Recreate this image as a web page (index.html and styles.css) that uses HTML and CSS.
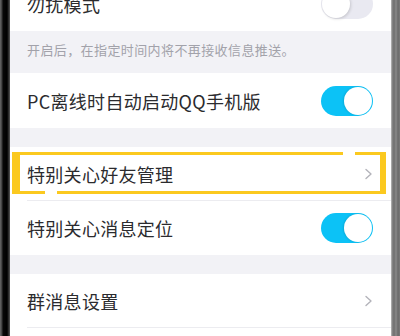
FILE: index.html
```html
<!DOCTYPE html>
<html lang="zh-CN">
<head>
<meta charset="utf-8">
<link rel="stylesheet" href="styles.css">
</head>
<body>
<div class="device">
  <div class="bezel bezel-left"></div>
  <div class="screen">
    <div class="row row-first">
      <span class="label">勿扰模式</span>
      <span class="switch off"><span class="knob"></span></span>
    </div>
    <div class="hint">开启后，在指定时间内将不再接收信息推送。</div>
    <div class="row row-tall">
      <span class="label">PC离线时自动启动QQ手机版</span>
      <span class="switch on"><span class="knob"></span></span>
    </div>
    <div class="gap"></div>
    <div class="row row-sep highlighted">
      <span class="label">特别关心好友管理</span>
      <svg class="chev" width="9" height="12" viewBox="0 0 9 12"><polyline points="2,1.5 7,6 2,10.5" fill="none" stroke="#b3b3ba" stroke-width="1.4" stroke-linecap="round" stroke-linejoin="round"/></svg>
      <span class="mark mark-left"></span>
      <span class="mark mark-right"></span>
      <span class="mark mark-top-a"></span>
      <span class="mark mark-top-b"></span>
      <span class="mark mark-bot-a"></span>
      <span class="mark mark-bot-b"></span>
    </div>
    <div class="row">
      <span class="label">特别关心消息定位</span>
      <span class="switch on"><span class="knob"></span></span>
    </div>
    <div class="gap"></div>
    <div class="row row-sep">
      <span class="label">群消息设置</span>
      <svg class="chev" width="9" height="12" viewBox="0 0 9 12"><polyline points="2,1.5 7,6 2,10.5" fill="none" stroke="#b3b3ba" stroke-width="1.4" stroke-linecap="round" stroke-linejoin="round"/></svg>
    </div>
    <div class="row"></div>
  </div>
  <div class="bezel bezel-right"></div>
</div>
</body>
</html>
```

FILE: styles.css
```css
html, body {
  margin: 0;
  padding: 0;
  width: 400px;
  height: 336px;
  overflow: hidden;
  background: #f2f2f6;
}
.device {
  display: flex;
  width: 400px;
  height: 336px;
  overflow: hidden;
}
.bezel {
  flex: 0 0 10px;
  height: 336px;
}
.bezel-left {
  background: linear-gradient(to right, #6a6a6a 0, #3a3a3a 2px, #080808 3px, #000 7px, #1a1a1a 8px, #5a5a5a 10px);
}
.bezel-right {
  flex: 0 0 9px;
  background: linear-gradient(to right, #c8c8c8 0, #8a8a8a 1px, #6e6e6e 3px, #8a8a8a 5px, #6a6a6a 7px, #7a7a7a 9px);
}
.screen {
  flex: 1;
  display: flex;
  flex-direction: column;
  background: #f2f2f6;
  font-family: "Noto Sans CJK SC", "Noto Sans", sans-serif;
  position: relative;
}
.row {
  position: relative;
  flex: 0 0 auto;
  height: 54px;
  background: #fff;
  display: flex;
  align-items: center;
  justify-content: space-between;
  padding: 0 18px 0 17px;
  box-sizing: border-box;
}
.row-first {
  height: 55px;
  margin-top: -24px;
}
.row-tall {
  height: 55px;
}
.row-sep::after {
  content: "";
  position: absolute;
  left: 17px;
  right: 0;
  bottom: 0;
  height: 1px;
  background: #ececf0;
}
.label {
  font-size: 18px;
  color: #2b2b2e;
  letter-spacing: 0.3px;
  line-height: 24px;
}
.hint {
  flex: 0 0 auto;
  height: 42px;
  box-sizing: border-box;
  padding: 10px 0 0 17px;
  font-size: 13px;
  line-height: 18px;
  letter-spacing: 0.4px;
  color: #a2a2aa;
}
.gap {
  flex: 0 0 19px;
}
.switch {
  position: relative;
  width: 52px;
  height: 30px;
  border-radius: 15px;
  box-sizing: border-box;
}
.switch.on {
  background: #0cc2f6;
}
.switch.off {
  background: #e9e9f1;
}
.knob {
  position: absolute;
  top: 1px;
  width: 28px;
  height: 28px;
  border-radius: 50%;
  background: #fff;
}
.switch.on .knob {
  right: 1px;
  box-shadow: -1px 0 2px rgba(0,0,0,0.12);
}
.switch.off .knob {
  left: 1px;
  box-shadow: 1px 1px 3px rgba(0,0,0,0.15);
}
.chev {
  display: block;
}
.mark {
  position: absolute;
  background: #fbc91f;
}
.mark-left {
  left: 2px;
  top: 5px;
  width: 8px;
  height: 42px;
  border-radius: 1px;
}
.mark-right {
  left: 370px;
  top: 5px;
  width: 6px;
  height: 42px;
  border-radius: 1px;
}
.mark-top-a {
  left: 2px;
  top: 5px;
  width: 331px;
  height: 3px;
}
.mark-top-b {
  left: 345px;
  top: 5px;
  width: 31px;
  height: 3px;
}
.mark-bot-a {
  left: 2px;
  top: 44px;
  width: 33px;
  height: 3px;
}
.mark-bot-b {
  left: 47px;
  top: 44px;
  width: 329px;
  height: 3px;
}
```
